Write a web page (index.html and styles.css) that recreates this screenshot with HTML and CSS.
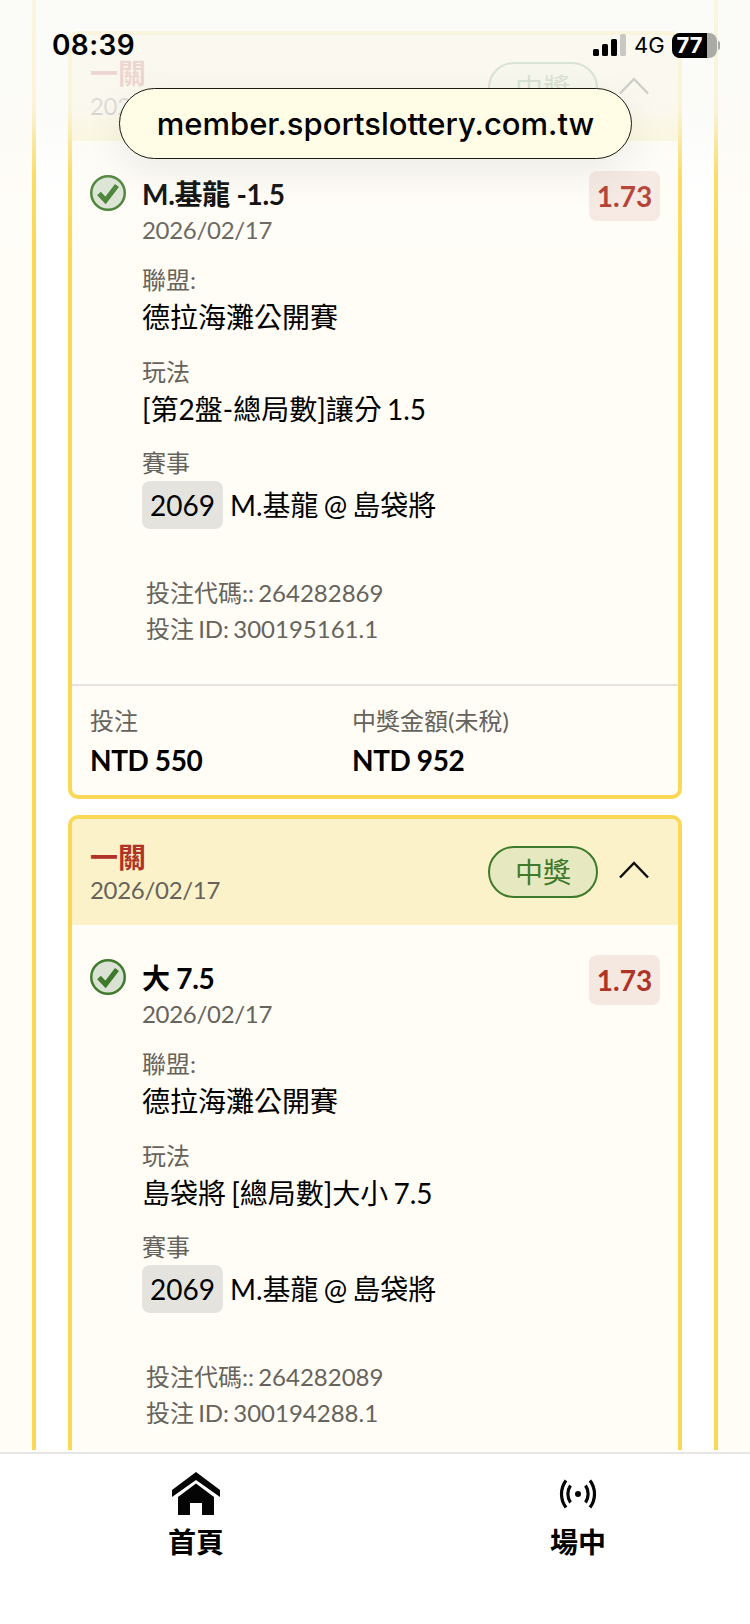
FILE: index.html
```html
<!DOCTYPE html>
<html lang="zh-Hant">
<head>
<meta charset="utf-8">
<title>member.sportslottery.com.tw</title>
<link rel="stylesheet" href="styles.css">
</head>
<body>
<div class="app">
  <main class="viewport">
    <div class="panel">
      <section class="card">
        <header class="card-head">
          <div class="head-text">
            <div class="head-title">一關</div>
            <div class="head-date">2026/02/17</div>
          </div>
          <span class="badge">中獎</span>
          <svg class="chevron" viewBox="0 0 32 18"><path d="M2 16.5 16 2l14 14.5"/></svg>
        </header>
        <div class="card-body">
          <div class="pick">
            <svg class="check" viewBox="0 0 36 36"><circle cx="18" cy="18" r="16.75" class="check-ring"/><path d="M9 18.500l6.500 7L27 10.500" class="check-mark"/></svg>
            <div class="pick-text">
              <div class="pick-title">M.基龍 -1.5</div>
              <div class="pick-date">2026/02/17</div>
            </div>
            <div class="odds">1.73</div>
          </div>
          <div class="field"><div class="field-label">聯盟:</div><div class="field-value">德拉海灘公開賽</div></div>
          <div class="field"><div class="field-label">玩法</div><div class="field-value">[第2盤-總局數]讓分 1.5</div></div>
          <div class="field field-match"><div class="field-label">賽事</div><div class="match"><span class="chip">2069</span><span class="field-value">M.基龍 @ 島袋將</span></div></div>
          <div class="codes"><div>投注代碼:: 264282869</div><div>投注 ID: 300195161.1</div></div>
        </div>
        <footer class="card-foot">
          <div class="stat"><div class="stat-label">投注</div><div class="stat-value">NTD 550</div></div>
          <div class="stat"><div class="stat-label">中獎金額(未稅)</div><div class="stat-value">NTD 952</div></div>
        </footer>
      </section>
      <section class="card">
        <header class="card-head">
          <div class="head-text">
            <div class="head-title">一關</div>
            <div class="head-date">2026/02/17</div>
          </div>
          <span class="badge">中獎</span>
          <svg class="chevron" viewBox="0 0 32 18"><path d="M2 16.5 16 2l14 14.5"/></svg>
        </header>
        <div class="card-body">
          <div class="pick">
            <svg class="check" viewBox="0 0 36 36"><circle cx="18" cy="18" r="16.75" class="check-ring"/><path d="M9 18.500l6.500 7L27 10.500" class="check-mark"/></svg>
            <div class="pick-text">
              <div class="pick-title">大 7.5</div>
              <div class="pick-date">2026/02/17</div>
            </div>
            <div class="odds">1.73</div>
          </div>
          <div class="field"><div class="field-label">聯盟:</div><div class="field-value">德拉海灘公開賽</div></div>
          <div class="field"><div class="field-label">玩法</div><div class="field-value">島袋將 [總局數]大小 7.5</div></div>
          <div class="field field-match"><div class="field-label">賽事</div><div class="match"><span class="chip">2069</span><span class="field-value">M.基龍 @ 島袋將</span></div></div>
          <div class="codes"><div>投注代碼:: 264282089</div><div>投注 ID: 300194288.1</div></div>
        </div>
      </section>
    </div>
  </main>
  <nav class="tabbar">
    <a class="tab">
      <svg class="tab-icon" viewBox="0 0 48 44"><path d="M24 0 0 18v7L24 8l24 17v-7z"/><path d="M24 11.500 6 25v18h12V31h12v12h12V25z"/></svg>
      <span>首頁</span>
    </a>
    <a class="tab">
      <svg class="tab-icon live" viewBox="0 0 48 44"><circle cx="24" cy="22" r="3" class="dot"/><path d="M16.500 13.500c-3.500 5-3.500 12 0 17M31.500 13.500c3.500 5 3.500 12 0 17M12 8.500c-6 8-6 19 0 27M36 8.500c6 8 6 19 0 27"/></svg>
      <span>場中</span>
    </a>
  </nav>
  <div class="top-fade"></div>
  <div class="status">
    <span class="clock">08:39</span>
    <div class="status-right">
      <svg class="signal" viewBox="0 0 33 22"><rect x="0" y="15" width="6" height="7" rx="1.500" class="on"/><rect x="9" y="10" width="6" height="12" rx="1.500" class="on"/><rect x="18" y="5" width="6" height="17" rx="1.500" class="on"/><rect x="27" y="0" width="6" height="22" rx="1.500" class="off"/></svg>
      <span class="net">4G</span>
      <div class="battery"><span class="battery-fill">77</span></div>
    </div>
  </div>
  <div class="url-pill">member.sportslottery.com.tw</div>
</div>
</body>
</html>
```
FILE: styles.css
```css
* { box-sizing: border-box; }
html, body { margin: 0; padding: 0; }
body {
  width: 750px;
  height: 1624px;
  overflow: hidden;
  background: #fffdf6;
  font-family: Lato, "Noto Sans CJK TC", sans-serif;
  color: #000;
}
.app {
  position: relative;
  width: 750px;
  height: 1624px;
  display: flex;
  flex-direction: column;
  overflow: hidden;
}
.viewport {
  height: 1450px;
  flex: none;
  overflow: hidden;
  padding: 0 32px;
}
.panel {
  height: 1450px;
  overflow: hidden;
  background: #fff;
  border-left: 4px solid #fad855;
  border-right: 4px solid #fad855;
  padding: 31px 32px 0;
  display: flex;
  flex-direction: column;
  gap: 16px;
}
.card {
  flex: none;
  border: 4px solid #fad855;
  border-radius: 10px;
  background: #fffdf6;
  overflow: hidden;
}
.card-head {
  height: 106px;
  background: #fcf2c9;
  display: flex;
  align-items: center;
  padding: 0 19px 4px 18px;
}
.head-text { flex: 1; margin-top: 4px; }
.head-title {
  font-size: 28px;
  line-height: 36px;
  font-weight: 700;
  color: #af3327;
}
.head-date {
  font-size: 24px;
  line-height: 30px;
  letter-spacing: -.3px;
  color: #66635c;
}
.badge {
  width: 110px;
  height: 52px;
  margin-top: 4px;
  border: 2px solid #3f7a2c;
  border-radius: 26px;
  background: #e6e8bf;
  color: #3f7a2c;
  font-size: 28px;
  line-height: 48px;
  text-align: center;
  margin-right: 20px;
}
.chevron {
  width: 32px;
  height: 18px;
  margin-right: 9px;
  fill: none;
  stroke: #111;
  stroke-width: 2.500;
}
.card-body { padding: 34px 18px 0; height: 543px; }
.pick { display: flex; align-items: flex-start; }
.check { width: 36px; height: 36px; flex: none; }
.check-ring { fill: #dae3d3; stroke: #3f7a2c; stroke-width: 2.500; }
.check-mark { fill: none; stroke: #3f7a2c; stroke-width: 5; }
.pick-text { flex: 1; margin-left: 16px; }
.pick-title {
  font-size: 28px;
  line-height: 38px;
  font-weight: 700;
  letter-spacing: -.3px;
}
.pick-date {
  font-size: 24px;
  line-height: 34px;
  letter-spacing: -.3px;
  color: #66635c;
}
.odds {
  width: 71px;
  height: 50px;
  margin-top: -4px;
  background: #f5e8e1;
  border-radius: 8px;
  color: #af3327;
  font-size: 28px;
  font-weight: 700;
  line-height: 50px;
  text-align: center;
}
.field { margin: 17px 0 0 52px; }
.pick + .field { margin-top: 15px; }
.field-match { margin-top: 16px; }
.field-label {
  font-size: 24px;
  line-height: 35px;
  color: #66635c;
}
.field-value {
  font-size: 28px;
  line-height: 40px;
  word-spacing: -2px;
}
.match { display: flex; align-items: center; margin-top: 1px; }
.chip {
  width: 81px;
  height: 48px;
  background: #e5e3de;
  border-radius: 8px;
  font-size: 28px;
  line-height: 48px;
  text-align: center;
  margin-right: 7px;
}
.codes {
  margin: 46px 0 0 56px;
  font-size: 24px;
  line-height: 36px;
  word-spacing: -2px;
  color: #66635c;
}
.card-foot {
  border-top: 2px solid #e5e3de;
  height: 111px;
  display: flex;
  padding: 17px 19px 0 18px;
}
.stat { width: 262px; }
.stat-label {
  font-size: 24px;
  line-height: 36px;
  color: #66635c;
}
.stat-value {
  font-size: 28px;
  line-height: 43px;
  font-weight: 700;
  letter-spacing: -.4px;
}
.tabbar {
  margin-top: 2px;
  flex: 1;
  border-top: 2px solid #e6e6e6;
  background: #fff;
  display: flex;
  gap: 282px;
  padding: 18px 0 0 146px;
}
.tab {
  width: 100px;
  display: flex;
  flex-direction: column;
  align-items: center;
  font-size: 28px;
  line-height: 40px;
  font-weight: 700;
  color: #000;
}
.tab-icon { width: 48px; height: 44px; fill: #050505; margin-bottom: 6px; }
.tab-icon.live { fill: none; stroke: #050505; stroke-width: 3.200; }
.tab-icon .dot { fill: #050505; stroke: none; }
.top-fade {
  position: absolute;
  top: 0;
  left: 0;
  right: 0;
  height: 260px;
  background: linear-gradient(to bottom, rgba(250,250,247,.85) 0, rgba(250,250,247,.8) 110px, rgba(250,250,247,.12) 175px, rgba(250,250,247,0) 260px);
}
.status {
  position: absolute;
  top: 26px;
  left: 52px;
  width: 665px;
  height: 38px;
  display: flex;
  align-items: center;
  justify-content: space-between;
}
.clock {
  font-family: Inter, sans-serif;
  font-size: 28px;
  font-weight: 600;
  letter-spacing: .4px;
}
.status-right { display: flex; align-items: center; }
.signal { width: 33px; height: 22px; margin-right: 8px; }
.signal .on { fill: #000; }
.signal .off { fill: #c9c9c4; }
.net {
  font-family: Inter, sans-serif;
  font-size: 22px;
  margin-right: 9px;
  width: 29px;
}
.battery {
  position: relative;
  width: 45px;
  height: 25px;
  border-radius: 8px;
  background: #aaaaa6;
}
.battery::after {
  content: "";
  position: absolute;
  left: 46px;
  top: 8px;
  width: 2px;
  height: 9px;
  border-radius: 0 2px 2px 0;
  background: #aaaaa6;
}
.battery-fill {
  display: block;
  width: 35px;
  height: 25px;
  border-radius: 8px 0 0 8px;
  background: #000;
  color: #fff;
  font-family: Inter, sans-serif;
  font-size: 22px;
  line-height: 25px;
  font-weight: 700;
  text-align: center;
}
.url-pill {
  position: absolute;
  top: 88px;
  left: 119px;
  width: 513px;
  height: 71px;
  border: 1.500px solid #1a1a12;
  border-radius: 36px;
  background: #fffde6;
  box-shadow: 0 14px 40px rgba(0,0,0,.07);
  font-family: Inter, sans-serif;
  font-size: 31px;
  font-weight: 500;
  line-height: 70px;
  text-align: center;
}
```
